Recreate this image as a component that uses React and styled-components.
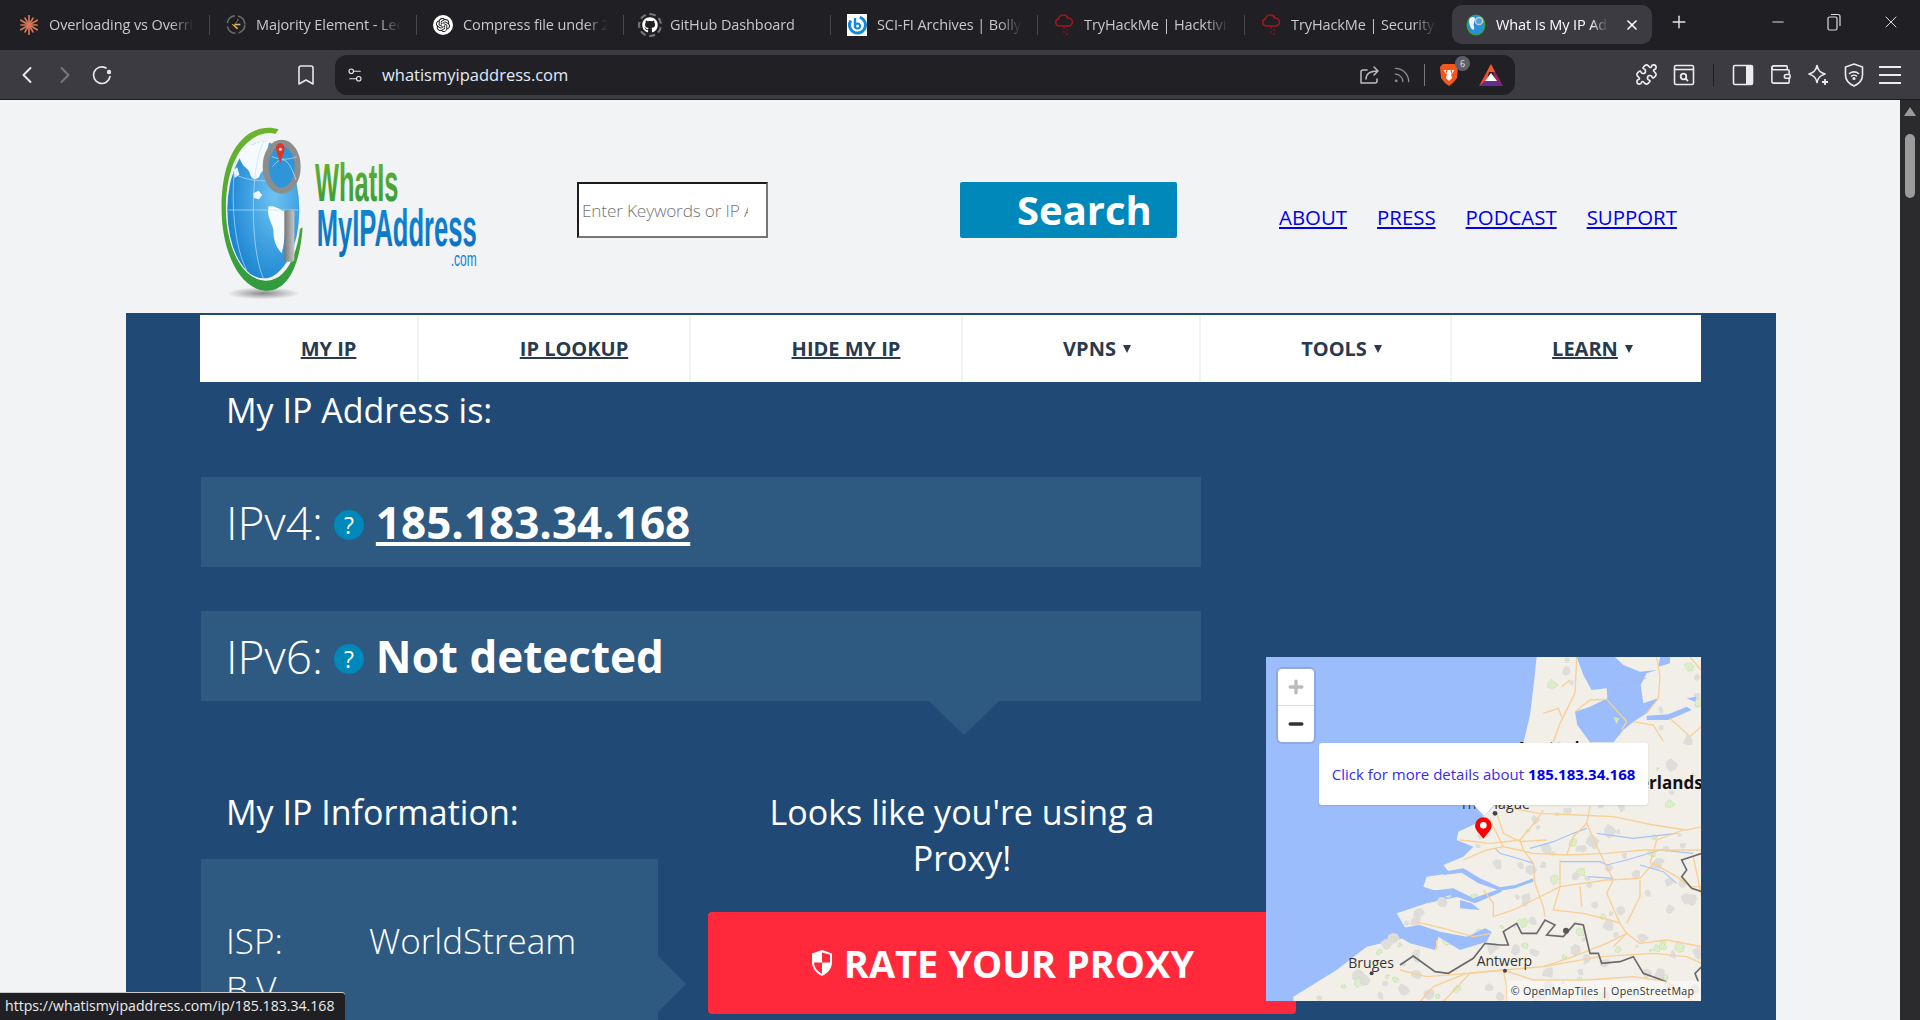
import React from 'react';
import styled, {createGlobalStyle} from 'styled-components';
import {ChevronLeft, ChevronRight, Bookmark, Settings2, Rss, Puzzle, Wallet, Plus, Minus, X} from 'lucide-react';
import {FaGithub} from 'react-icons/fa';
import {SiOpenai} from 'react-icons/si';

const GlobalStyle = createGlobalStyle`
  html, body {
    margin: 0;
    padding: 0;
    height: 1020px;
    overflow: hidden;
    background: #1f1f24;
    font-family: "Open Sans", "Liberation Sans", sans-serif;
  }
  * {
    box-sizing: border-box;
  }
`;

const Shell = styled.div`
  width: 1920px;
  height: 1020px;
  display: flex;
  flex-direction: column;
  overflow: hidden;
  position: relative;
`;

/* browser chrome */
const TabStrip = styled.div`
  height: 50px;
  flex: none;
  background: #1f1f24;
  display: flex;
  align-items: flex-start;
  padding: 5px 0 0 3px;
`;

const Tab = styled.div`
  width: ${(p) => (p.$active ? '200px' : '207px')};
  height: 39px;
  flex: none;
  display: flex;
  align-items: center;
  gap: 10px;
  padding-left: ${(p) => (p.$active ? '14px' : '16px')};
  border-radius: 10px;
  background: ${(p) => (p.$active ? '#3b3b41' : 'transparent')};
  position: relative;
  &::after {
    content: '';
    display: ${(p) => (p.$sep ? 'block' : 'none')};
    position: absolute;
    right: 0;
    top: 10px;
    width: 1px;
    height: 20px;
    background: #47474c;
  }
`;

const TabIcon = styled.span`
  width: 20px;
  height: 20px;
  flex: none;
  display: flex;
  align-items: center;
  justify-content: center;
  position: relative;
`;

const TabTitle = styled.span`
  width: ${(p) => (p.$active ? '112px' : '145px')};
  overflow: hidden;
  white-space: nowrap;
  font-size: 14.5px;
  letter-spacing: -0.1px;
  color: ${(p) => (p.$active ? '#ffffff' : '#c8c8ca')};
  mask-image: linear-gradient(90deg, #000 84%, transparent 100%);
`;

const TabClose = styled.span`
  display: flex;
  margin-left: 6px;
  color: #fff;
`;

const NewTab = styled.span`
  display: flex;
  margin-left: 17px;
  margin-top: 7px;
  color: #e6e6e6;
`;

const WindowButtons = styled.div`
  margin-left: auto;
  display: flex;
  align-items: center;
  gap: 40px;
  padding: 7px 19px 0 0;
  color: #dcdcdc;
`;

const Toolbar = styled.div`
  height: 50px;
  flex: none;
  background: #3b3b41;
  border-bottom: 1px solid #1e1e20;
  display: flex;
  align-items: center;
  padding: 0 0 0 13px;
  color: #e8e8ea;
`;

const NavIcons = styled.div`
  display: flex;
  align-items: center;
  gap: 14px;
  width: 322px;
`;

const ForwardIcon = styled(ChevronRight)`
  margin-left: -4px;
`;

const ReloadSlot = styled.span`
  display: flex;
  margin-left: -3px;
`;

const BookmarkSlot = styled.span`
  display: flex;
  margin-left: auto;
  margin-right: 17px;
`;

const Address = styled.div`
  width: 1180px;
  height: 40px;
  border-radius: 12px;
  background: #202025;
  display: flex;
  align-items: center;
  padding: 0 12px 0 11px;
  flex: none;
`;

const Url = styled.span`
  font-size: 16.5px;
  margin-left: 18px;
  color: #e2ecf8;
`;

const AddressRight = styled.div`
  margin-left: auto;
  display: flex;
  align-items: center;
  color: #bdbdc0;
`;

const FeedIcon = styled(Rss)`
  margin: 0 -2px 0 11px;
  color: #8e8e92;
`;

const VSep = styled.span`
  width: 1px;
  height: 22px;
  background: ${(p) => p.$color || '#77777c'};
  margin: 0 ${(p) => p.$gap || 14}px;
`;

const BadgeWrap = styled.span`
  position: relative;
  display: flex;
  margin-right: 20px;
`;

const Badge = styled.span`
  position: absolute;
  top: -7px;
  right: -11px;
  width: 15px;
  height: 15px;
  border-radius: 50%;
  background: #5d5f6b;
  color: #e4e4e4;
  font-size: 9px;
  line-height: 15px;
  text-align: center;
`;

const RightTools = styled.div`
  flex: 1;
  display: flex;
  align-items: center;
  gap: 15px;
  padding-left: 120px;
  color: #ececee;
`;

/* page */
const Viewport = styled.div`
  flex: 1;
  min-height: 0;
  display: flex;
`;

const Page = styled.main`
  flex: 1;
  min-width: 0;
  background: #f1f3f5;
  overflow: hidden;
  position: relative;
`;

const ScrollTrack = styled.div`
  width: 20px;
  flex: none;
  background: #2b2b2e;
  display: flex;
  flex-direction: column;
  align-items: center;
  padding-top: 7px;
`;

const ScrollArrow = styled.span`
  width: 0;
  height: 0;
  border-left: 6px solid transparent;
  border-right: 6px solid transparent;
  border-bottom: 9px solid #9b9b9b;
`;

const ScrollThumb = styled.span`
  width: 10px;
  height: 64px;
  margin-top: 18px;
  border-radius: 5px;
  background: #9b9b9b;
`;

const Header = styled.header`
  height: 213px;
  display: flex;
  align-items: flex-start;
  padding: 10px 0 0 200px;
`;

const LogoSvg = styled.svg`
  width: 300px;
  height: 200px;
  flex: none;
`;

const SearchInput = styled.input`
  width: 191px;
  height: 56px;
  flex: none;
  margin: 72px 0 0 77px;
  padding: 0 18px 0 3px;
  background: #fff;
  border-style: solid;
  border-width: 2px;
  border-color: #1c1c1c #767676 #767676 #1c1c1c;
  font-family: "Open Sans", sans-serif;
  font-size: 17.3px;
  font-weight: 300;
  letter-spacing: -0.2px;
  &::placeholder {
    color: #757575;
    opacity: 1;
  }
`;

const SearchButton = styled.button`
  width: 217px;
  height: 56px;
  flex: none;
  margin: 72px 0 0 192px;
  padding: 0 0 0 57px;
  border: 0;
  border-radius: 2px;
  background: #0088bb;
  color: #fff;
  font-family: "Open Sans", sans-serif;
  font-size: 40px;
  font-weight: 700;
  line-height: 56px;
  text-align: left;
`;

const TopLinks = styled.nav`
  display: flex;
  gap: 30px;
  margin: 93px 0 0 102px;
`;

const TopLink = styled.a`
  color: #0000ee;
  font-size: 20.4px;
  line-height: 28px;
  text-decoration: underline;
`;

const Panel = styled.section`
  width: 1650px;
  min-height: 800px;
  margin-left: 126px;
  padding: 2px 0 0 74px;
  background: #204a75;
`;

const MainNav = styled.nav`
  display: grid;
  grid-template-columns: 217px 270px 270px 236px 249px 249px;
  gap: 2px;
  width: 1501px;
  height: 67px;
  background: #f1f3f5;
`;

const NavCell = styled.a`
  display: flex;
  align-items: center;
  justify-content: center;
  gap: 7px;
  padding-left: ${(p) => (p.$caret ? '32px' : '40px')};
  background: #fff;
  color: #283a4e;
  font-size: 20px;
  font-weight: 700;
  text-decoration: none;
  & > span {
    text-decoration: ${(p) => (p.$plain ? 'none' : 'underline')};
  }
`;

const Caret = styled.i`
  width: 0;
  height: 0;
  border-left: 4px solid transparent;
  border-right: 4px solid transparent;
  border-top: 8px solid #283a4e;
`;

const Content = styled.div`
  display: grid;
  grid-template-columns: 1000px 435px;
  column-gap: 65px;
  margin-left: 1px;
`;

const Heading = styled.h2`
  margin: ${(p) => (p.$flush ? '0' : '5px 0 0')};
  padding-left: 25px;
  font-size: 34px;
  font-weight: 400;
  line-height: 46px;
  color: #fff;
`;

const IpBox = styled.div`
  height: 90px;
  margin-top: 44px;
  padding-left: 25px;
  background: #2e5a82;
  display: flex;
  align-items: center;
  color: #fff;
  position: relative;
  &::after {
    content: '';
    display: ${(p) => (p.$tail ? 'block' : 'none')};
    position: absolute;
    left: 728px;
    top: 100%;
    border-left: 35px solid transparent;
    border-right: 35px solid transparent;
    border-top: 34px solid #2e5a82;
  }
`;

const IpLabel = styled.span`
  font-size: 46px;
  font-weight: 300;
`;

const Help = styled.span`
  width: 30px;
  height: 30px;
  margin: 6px 12px 0 11px;
  border-radius: 50%;
  background: #0088bb;
  color: #fff;
  font-size: 23px;
  line-height: 30px;
  text-align: center;
`;

const IpValue = styled.a`
  font-size: 44px;
  font-weight: 700;
  color: #fff;
  text-decoration: ${(p) => (p.$link ? 'underline' : 'none')};
`;

const InfoRow = styled.div`
  display: grid;
  grid-template-columns: 457px 508px;
  column-gap: 50px;
  margin-top: 88px;
  width: 1015px;
`;

const InfoBox = styled.div`
  height: 200px;
  margin-top: 24px;
  padding: 58px 25px 0;
  background: #2e5a82;
  color: #fff;
  font-size: 35px;
  font-weight: 300;
  line-height: 48px;
  position: relative;
  &::after {
    content: '';
    position: absolute;
    left: 100%;
    top: 97px;
    border-top: 28px solid transparent;
    border-bottom: 28px solid transparent;
    border-left: 28px solid #2e5a82;
  }
`;

const InfoKey = styled.span`
  display: inline-block;
  width: 143px;
`;

const ProxyCol = styled.div`
  text-align: center;
`;

const ProxyText = styled.p`
  margin: 0;
  padding: 0 60px;
  font-size: 34px;
  line-height: 46px;
  color: #fff;
`;

const RateButton = styled.a`
  width: 588px;
  height: 102px;
  margin-top: 31px;
  border-radius: 4px;
  background: #ff293b;
  color: #fff;
  display: flex;
  align-items: center;
  justify-content: center;
  gap: 10px;
  font-size: 38px;
  font-weight: 700;
  text-decoration: none;
`;

const MapBox = styled.div`
  width: 435px;
  height: 344px;
  margin-top: 275px;
  position: relative;
  z-index: 1;
  overflow: hidden;
  background: #9cbdfb;
`;

const MapSvg = styled.svg`
  display: block;
  width: 435px;
  height: 344px;
`;

const ZoomControl = styled.div`
  position: absolute;
  left: 12px;
  top: 12px;
  width: 36px;
  height: 73px;
  border-radius: 4px;
  background: #fff;
  box-shadow: 0 0 0 2px rgba(0, 0, 0, 0.1);
  display: flex;
  flex-direction: column;
`;

const ZoomButton = styled.span`
  flex: 1;
  display: flex;
  align-items: center;
  justify-content: center;
  color: ${(p) => p.$color};
  & + & {
    border-top: 1px solid #ddd;
  }
`;

const Popup = styled.a`
  position: absolute;
  left: 53px;
  top: 86px;
  width: 329px;
  height: 62px;
  border-radius: 3px;
  background: #fff;
  box-shadow: 0 1px 2px rgba(0, 0, 0, 0.1);
  display: flex;
  align-items: center;
  justify-content: center;
  white-space: nowrap;
  font-size: 15px;
  color: #3a2ce8;
  text-decoration: none;
  &::after {
    content: '';
    position: absolute;
    left: 155px;
    top: 100%;
    border-left: 10px solid transparent;
    border-right: 10px solid transparent;
    border-top: 11px solid #fff;
  }
  & b {
    margin-left: 4px;
    color: #0000ee;
  }
`;

const StatusBar = styled.div`
  position: absolute;
  left: 0;
  bottom: 0;
  width: 345px;
  height: 27px;
  border-top-right-radius: 3px;
  background: #202024;
  box-shadow: 0 -1px 0 #c9c9c9;
  color: #ececec;
  font-size: 14.1px;
  line-height: 26px;
  padding-left: 5px;
  z-index: 2;
`;

/* favicons */
const ClaudeIcon = () => (
  <svg width="20" height="20" viewBox="0 0 20 20" stroke="#d97757" strokeWidth="1.7" strokeLinecap="round">
    {[0, 30, 60, 90, 120, 150, 180, 210, 240, 270, 300, 330].map((a) => (
      <line key={a} x1="10" y1="10" x2="10" y2={a % 60 === 0 ? 0.5 : 2} transform={`rotate(${a} 10 10)`} />
    ))}
  </svg>
);

const LeetIcon = () => (
  <svg width="25" height="25" viewBox="0 0 25 25" fill="none">
    <circle cx="12.5" cy="12.5" r="11" stroke="#6a6a6c" strokeWidth="2" strokeDasharray="14 4" />
    <path d="M15 6L9 12.5l5.5 5.5" stroke="#f0a21c" strokeWidth="2.2" />
    <path d="M11 12.5h7" stroke="#b9b9b9" strokeWidth="2" />
    <path d="M14 6L8.5 12" stroke="#111" strokeWidth="2.4" />
  </svg>
);

const RingIcon = styled.span`
  width: 24px;
  height: 24px;
  flex: none;
  border-radius: 50%;
  border: 2px dashed #747476;
  display: flex;
  align-items: center;
  justify-content: center;
  color: #fff;
`;

const WhiteDisc = styled.span`
  width: 20px;
  height: 20px;
  border-radius: 50%;
  background: #fff;
  color: #111;
  display: flex;
  align-items: center;
  justify-content: center;
`;

const BingIcon = () => (
  <svg width="20" height="22" viewBox="0 0 20 22">
    <rect width="20" height="22" fill="#fff" />
    <circle cx="10.5" cy="11" r="8" fill="none" stroke="#1388d8" strokeWidth="3" strokeDasharray="38 10" transform="rotate(-60 10.5 11)" />
    <path d="M8 4v10" stroke="#1388d8" strokeWidth="2.4" />
    <circle cx="10.5" cy="12" r="2.6" fill="none" stroke="#1388d8" strokeWidth="2" />
  </svg>
);

const ThmIcon = () => (
  <svg width="20" height="24" viewBox="0 0 20 24" fill="none">
    <path d="M5 13a3.5 3.5 0 0 1-.6-6.9A5 5 0 0 1 14 5.2a3.6 3.6 0 0 1 1 7.8H5z" stroke="#a3171d" strokeWidth="1.5" />
    <path d="M9 15h2M12 17h2M9 19h2M12 21h2" stroke="#7c1419" strokeWidth="1.6" />
  </svg>
);

const GlobeFav = () => (
  <svg width="20" height="22" viewBox="0 0 20 22">
    <ellipse cx="10" cy="11" rx="9.5" ry="10.5" fill="#3b9f3a" />
    <ellipse cx="10" cy="11" rx="8" ry="9.5" fill="#2a8fd8" />
    <path d="M4 4c3-2 5-1 5 1S7 9 8 13s-2 3-3 1-3-7-1-10z" fill="#e9f5fd" />
    <circle cx="13" cy="7" r="3.6" fill="#4aa3df" stroke="#c9c9c9" strokeWidth="1.5" />
  </svg>
);

const TABS = [
  {title: 'Overloading vs Overriding', icon: <ClaudeIcon />, sep: true},
  {title: 'Majority Element - LeetCode', icon: <LeetIcon />, sep: true},
  {title: 'Compress file under 2 MB', icon: <WhiteDisc><SiOpenai size={14} /></WhiteDisc>, sep: true},
  {title: 'GitHub Dashboard', icon: <RingIcon><FaGithub size={16} /></RingIcon>, sep: true},
  {title: 'SCI-FI Archives | Bollyflix', icon: <BingIcon />, sep: true},
  {title: 'TryHackMe | Hacktivities', icon: <ThmIcon />, sep: true},
  {title: 'TryHackMe | Security Training', icon: <ThmIcon />, sep: false},
];

const ReloadIcon = () => (
  <svg width="24" height="24" viewBox="0 0 24 24" fill="none" stroke="currentColor" strokeWidth="1.7">
    <path d="M20 13.5A8.3 8.3 0 1 1 16 5" strokeLinecap="round" />
    <circle cx="19" cy="9" r="2.2" fill="currentColor" stroke="none" />
  </svg>
);

const ShareIcon = () => (
  <svg width="22" height="22" viewBox="0 0 22 22" fill="none" stroke="currentColor" strokeWidth="1.5" strokeLinecap="round" strokeLinejoin="round">
    <path d="M8 6H4a2 2 0 0 0-2 2v11h14a2 2 0 0 0 2-2v-2" />
    <path d="M7 15c0-5 4-8 12-8M15 3l4 4-4 4" />
  </svg>
);

const BraveIcon = () => (
  <svg width="20" height="24" viewBox="0 0 20 24">
    <path d="M4 1h12l3 3-1 11-4 5-4 3-4-3-4-5L1 4z" fill="#f1561f" />
    <path d="M5 7h10l-1 3-2 1 1 4-3 3-3-3 1-4-2-1z" fill="#fff" />
    <path d="M8 7l-1 3M12 7l1 3" stroke="#f1561f" strokeWidth="1.2" />
  </svg>
);

const BatIcon = () => (
  <svg width="24" height="22" viewBox="0 0 24 22">
    <polygon points="12,0 24,22 16,16" fill="#9e1f63" />
    <polygon points="12,0 0,22 8,16" fill="#ef4b2c" />
    <polygon points="0,22 24,22 18,17 6,17" fill="#662d91" />
    <polygon points="12,9 6,17 18,17" fill="#fff" />
    <polygon points="12,0 8,8 16,8" fill="#f05a24" />
  </svg>
);

const ReaderIcon = () => (
  <svg width="22" height="22" viewBox="0 0 22 22" fill="none" stroke="currentColor" strokeWidth="1.6">
    <rect x="1.5" y="1.5" width="19" height="19" rx="1.5" />
    <path d="M1.5 5.5h19" />
    <circle cx="10.5" cy="12.5" r="2.8" strokeWidth="1.8" />
    <path d="M12.5 14.5l2.5 2.5" strokeWidth="1.8" />
  </svg>
);

const SidebarIcon = () => (
  <svg width="22" height="22" viewBox="0 0 22 22">
    <rect x="1.5" y="1.5" width="19" height="19" rx="1.5" fill="none" stroke="currentColor" strokeWidth="1.6" />
    <rect x="14" y="1.5" width="6.5" height="19" fill="currentColor" />
  </svg>
);

const SparkIcon = () => (
  <svg width="22" height="22" viewBox="0 0 22 22" fill="none" stroke="currentColor" strokeWidth="1.6" strokeLinejoin="round">
    <path d="M10 1.5c1 5 3 7 8 8.500-5 1.500-7 3.500-8 8.500-1-5-3-7-8-8.500 5-1.500 7-3.500 8-8.500z" />
    <path d="M18 15v6M15 18h6" strokeWidth="1.8" />
  </svg>
);

const VpnIcon = () => (
  <svg width="20" height="24" viewBox="0 0 20 24" fill="none" stroke="currentColor" strokeWidth="1.6" strokeLinecap="round">
    <path d="M10 1l8.500 3v8c0 5-4 9-8.500 11C5.500 21 1.500 17 1.500 12V4z" />
    <path d="M5.500 10.500c2.500-2.200 6.500-2.200 9 0M7.500 13c1.300-1.100 3.700-1.100 5 0" />
    <circle cx="10" cy="15.500" r="0.8" fill="currentColor" />
  </svg>
);

const MenuIcon = () => (
  <svg width="22" height="20" viewBox="0 0 22 20" stroke="currentColor" strokeWidth="2">
    <path d="M0 2h22M0 10h22M0 18h22" />
  </svg>
);

const RestoreIcon = () => (
  <svg width="14" height="18" viewBox="0 0 14 18" fill="none" stroke="currentColor" strokeWidth="1.2">
    <rect x="1" y="4" width="9" height="13" rx="1.5" />
    <path d="M4 1.500h7a2 2 0 0 1 2 2V13" />
  </svg>
);

const ShieldMark = () => (
  <svg width="24" height="28" viewBox="0 0 24 28">
    <path d="M12 1l10 3.500V13c0 6.500-4 11-10 14C6 24 2 19.500 2 13V4.500z" fill="#fff" />
    <path d="M12 3.500v10h8V5.800zM12 13.500H4c.3 5 3.200 8.700 8 11.200z" fill="#ff293b" />
  </svg>
);

const Logo = () => (
  <LogoSvg viewBox="0 0 900 600">
    <defs>
      <linearGradient id="lgGreen" x1="0" y1="0" x2="0" y2="1">
        <stop offset="0" stopColor="#6cb52d" />
        <stop offset="1" stopColor="#2f9a3e" />
      </linearGradient>
      <linearGradient id="lgBlue" x1="0" y1="0" x2="0" y2="1">
        <stop offset="0" stopColor="#0f8ad8" />
        <stop offset="1" stopColor="#0b6fc0" />
      </linearGradient>
      <radialGradient id="lgGlobe" cx="0.65" cy="0.4" r="0.8">
        <stop offset="0" stopColor="#6dc3f2" />
        <stop offset="1" stopColor="#0a78cc" />
      </radialGradient>
      <linearGradient id="lgHandle" x1="0" y1="0" x2="1" y2="0">
        <stop offset="0" stopColor="#777" />
        <stop offset="1" stopColor="#c8c8c8" />
      </linearGradient>
      <radialGradient id="lgShade">
        <stop offset="0" stopColor="#8a8a8a" />
        <stop offset="1" stopColor="#f1f3f5" />
      </radialGradient>
    </defs>
    <ellipse cx="190" cy="550" rx="110" ry="18" fill="url(#lgShade)" />
    <ellipse cx="190" cy="300" rx="108" ry="205" fill="url(#lgGlobe)" />
    <path d="M118 130c25-25 60-38 90-35-8 25-8 50 0 85-15-5-25 5-30 20-15 15-25 5-30-15-10-15-30-20-30-55z" fill="#fff" opacity="0.95" />
    <path d="M205 290c15-5 30 5 50 15 3 40 0 90-10 125-18-20-25-40-25-70-5-25-20-40-15-70z" fill="#fff" opacity="0.95" />
    <path d="M160 250l15-8 12 12-10 14-15-4zM100 180l12-8 6 22-14 10z" fill="#fff" opacity="0.9" />
    <path d="M120 110c-30 60-30 280 20 370M190 95c-40 80-40 320 0 410M85 300h210M100 190c50 30 130 30 185 0" fill="none" stroke="#bfe2f7" strokeWidth="2" />
    <path d="M236 58C210 50 165 48 125 90 80 135 62 220 65 310c3 110 50 225 130 232 70 5 105-80 113-190l-8 5c-12 95-50 158-105 155-75-5-115-110-117-205-2-85 18-165 60-205 30-30 65-38 88-30z" fill="url(#lgGreen)" />
    <ellipse cx="245" cy="170" rx="48" ry="72" fill="#2e95da" stroke="#8d8d8d" strokeWidth="18" />
    <path d="M218 170c30-40 50-20 70 40M215 140c30 10 50 10 75 0" fill="none" stroke="#cbe7f8" strokeWidth="2" />
    <path d="M241 100c-12 0-15 14-12 24 3 10 8 24 12 36 4-12 9-26 12-36 3-10 0-24-12-24z" fill="#d8392b" />
    <circle cx="241" cy="118" r="4.500" fill="#f6d9d6" />
    <rect x="253" y="300" width="30" height="155" rx="8" fill="url(#lgHandle)" />
    <text x="345" y="272" fontFamily="Liberation Sans" fontWeight="700" fontSize="162" textLength="250" lengthAdjust="spacingAndGlyphs" fill="url(#lgGreen)">WhatIs</text>
    <text x="350" y="408" fontFamily="Liberation Sans" fontWeight="700" fontSize="158" textLength="480" lengthAdjust="spacingAndGlyphs" fill="url(#lgBlue)">MyIPAddress</text>
    <text x="752" y="468" fontFamily="Liberation Sans" fontSize="58" textLength="78" lengthAdjust="spacingAndGlyphs" fill="#0f7fd0">.com</text>
  </LogoSvg>
);

const pts = (list) => list.map((p) => p.join(',')).join(' ');

/* map artwork: top part in viewBox units, lower part in the local units of the group below */
const ROADS = [
  [[180, 120], [270, 130], [360, 120], [370, 150], [400, 190], [405, 250], [430, 320], [435, 350]],
  [[290, 40], [310, 100], [360, 125], [440, 120]],
  [[430, 30], [410, 60], [360, 120]],
  [[270, 60], [310, 140], [400, 160], [500, 165], [620, 160], [730, 150], [905, 150]],
  [[500, 165], [520, 110], [560, 70], [570, 20]],
  [[560, 70], [600, 160], [640, 240], [620, 280], [660, 370], [680, 400]],
  [[280, 15], [420, 40], [530, 45], [640, 50], [760, 75], [860, 90], [905, 80]],
  [[190, 180], [260, 150], [310, 140]],
  [[250, 270], [280, 310], [280, 350], [340, 330], [400, 300], [480, 260], [620, 240], [720, 235], [760, 190], [830, 230], [870, 260], [905, 260]],
  [[480, 180], [480, 260], [460, 330], [550, 340], [630, 360], [660, 370]],
  [[540, 260], [545, 320]],
  [[720, 240], [720, 290], [680, 370]],
  [[640, 440], [680, 400], [720, 430], [800, 420], [905, 440]],
  [[750, 190], [770, 120], [850, 90]],
  [[45, 365], [130, 385], [220, 410], [275, 400]],
  [[110, 420], [110, 450]],
  [[0, 510], [80, 530], [200, 520], [310, 510], [430, 500], [520, 470], [620, 430], [680, 400]],
  [[310, 510], [320, 560], [320, 605]],
  [[310, 510], [400, 540], [560, 540], [700, 530], [800, 545], [880, 605]],
  [[430, 500], [600, 470], [760, 460], [860, 470], [905, 490]],
  [[310, 510], [210, 520], [130, 605]],
  [[200, 520], [100, 560], [60, 605]],
  [[880, 170], [905, 290]],
];

const TOP_ROADS = [
  [[950, 21], [945, 130], [900, 220], [880, 275]],
  [[905, 110], [930, 90]],
  [[1040, 148], [1100, 215], [1085, 240]],
  [[945, 185], [990, 150], [1040, 148]],
  [[850, 190], [895, 175], [905, 200]],
  [[1120, 215], [1180, 225], [1210, 275]],
  [[1195, 145], [1200, 80], [1190, 21]],
  [[1160, 190], [1195, 145]],
  [[1230, 205], [1290, 260], [1323, 230]],
  [[1323, 60], [1290, 21]],
];

const RIVERS = [
  [[285, 145], [300, 160], [370, 180], [400, 190]],
  [[390, 145], [460, 125], [520, 100], [560, 85]],
  [[590, 100], [700, 115], [830, 100]],
  [[480, 185], [600, 185], [620, 195], [680, 180], [780, 150], [880, 160]],
  [[565, 230], [640, 235]],
  [[720, 195], [790, 215], [830, 250]],
];

const ESTUARIES = [
  [[130, 215], [190, 205], [240, 235], [300, 262], [345, 255], [400, 235], [400, 245], [345, 265], [300, 272], [235, 250], [185, 218], [130, 225]],
  [[70, 275], [160, 265], [220, 295], [305, 265], [305, 275], [225, 310], [155, 285], [70, 300]],
  [[180, 300], [215, 310], [240, 330], [180, 325]],
  [[60, 375], [120, 395], [200, 410], [255, 385], [275, 395], [260, 425], [180, 450], [115, 410], [105, 450], [30, 430], [0, 412], [0, 385]],
];

const BORDERS = [
  [[0, 495], [40, 468], [105, 515], [145, 520], [220, 475], [255, 430], [300, 435], [325, 435], [310, 395], [350, 370], [365, 400], [410, 400], [435, 360], [465, 375], [440, 405], [490, 410], [525, 370], [550, 375], [570, 460], [595, 460], [605, 490], [660, 485], [700, 470], [730, 520], [800, 545]],
  [[905, 160], [845, 180], [860, 210], [845, 230], [875, 265], [905, 275]],
  [[905, 500], [885, 520], [895, 545]],
];

const coastAt = (y) => {
  if (y < 280) return 850;
  if (y < 600) return 790 - (y - 280) * 0.63;
  if (y < 890) return 590 - (y - 600) * 0.9;
  return 330 - (y - 890) * 1.35;
};

/* fixed seed, so the speckle of towns and woods is the same on every load */
const scatter = (seed, count, maxSize) => {
  let s = seed;
  const rnd = () => {
    s = (s * 1103515245 + 12345) % 2147483648;
    return s / 2147483648;
  };
  const out = [];
  while (out.length < count) {
    const x = 40 + rnd() * 1283;
    const y = 21 + rnd() * 1032;
    const inNorthWater = y < 280 && x > 950 && x < 1190;
    if (x > coastAt(y) + 25 && !inNorthWater) {
      const size = 5 + rnd() * maxSize;
      const corners = [0, 1, 2, 3, 4, 5, 6].map((i) => {
        const a = (i / 7) * Math.PI * 2;
        const r = size * (0.6 + rnd() * 0.6);
        return [Math.round(x + Math.cos(a) * r), Math.round(y + Math.sin(a) * r)];
      });
      out.push(pts(corners));
    }
  }
  return out;
};

const TOWNS = scatter(7, 120, 16);
const WOODS = scatter(91, 45, 12);

const MapArt = () => (
  <MapSvg viewBox="18 21 1305 1032" preserveAspectRatio="none">
    <rect x="18" y="21" width="1305" height="1032" fill="#9cbdfb" />
    <path d="M830 21L820 115 810 195 790 280 740 350 700 470 650 520 595 545 590 570 640 590 610 620 550 645 570 670 500 680 490 710 520 720 620 735 500 760 410 790 440 840 510 860 430 865 320 890 230 960 100 1040 100 1053 1323 1053 1323 21Z" fill="#f2efe9" />
    {TOWNS.map((t) => (
      <polygon key={t} points={t} fill="#dfddd9" />
    ))}
    {WOODS.map((t) => (
      <polygon key={t} points={t} fill="#dcedc8" stroke="#9bdc86" strokeWidth="2" strokeDasharray="3 4" />
    ))}
    <polygon points="950,21 970,75 995,120 1040,115 1042,145 990,170 945,185 952,225 990,277 1060,277 1090,240 1120,215 1160,190 1195,145 1150,160 1142,105 1160,70 1190,60 1140,65 1090,45 1065,21" fill="#9cbdfb" />
    <polygon points="1160,197 1225,193 1280,170 1295,180 1225,210 1160,210" fill="#9cbdfb" />
    <polygon points="1200,21 1230,21 1230,40 1195,50" fill="#9cbdfb" />
    <polygon points="1280,145 1310,140 1305,155" fill="#9cbdfb" />
    <polygon points="1060,200 1078,205 1070,222" fill="#cfe6b8" />
    <path d="M1070 105L1160 85M1065 105L1060 140M1040 150L960 200" fill="none" stroke="#a9b6d2" strokeWidth="2" />
    {TOP_ROADS.map((r) => (
      <polyline key={pts(r)} points={pts(r)} fill="none" stroke="#f8cf95" strokeWidth="4" />
    ))}
    <g transform="translate(420 450)">
      {ESTUARIES.map((e) => (
        <polygon key={pts(e)} points={pts(e)} fill="#9cbdfb" />
      ))}
      {RIVERS.map((r) => (
        <polyline key={pts(r)} points={pts(r)} fill="none" stroke="#a5c3fa" strokeWidth="3.500" />
      ))}
      {ROADS.map((r) => (
        <polyline key={pts(r)} points={pts(r)} fill="none" stroke="#f8cf95" strokeWidth="4" />
      ))}
      {BORDERS.map((b) => (
        <polyline key={pts(b)} points={pts(b)} fill="none" stroke="#6a6a6a" strokeWidth="5" />
      ))}
    </g>
    <circle cx="705" cy="490" r="7" fill="#444" />
    <circle cx="335" cy="970" r="6" fill="#444" />
    <circle cx="735" cy="962" r="6" fill="#444" />
    <circle cx="918" cy="842" r="9" fill="#555" />
    <g fontFamily="Open Sans" fill="#333">
      <text x="600" y="478" fontSize="42">The Hague</text>
      <text x="265" y="955" fontSize="42">Bruges</text>
      <text x="650" y="948" fontSize="42">Antwerp</text>
      <text x="770" y="306" fontSize="44" fontWeight="700" fill="#111">Amsterdam</text>
      <text x="1328" y="418" fontSize="51" fontWeight="700" fill="#111" textAnchor="end">Netherlands</text>
    </g>
    <path d="M670 566c-8-12-25-25-25-39a25 25 0 0 1 50 0c0 14-17 27-25 39z" fill="#f00" />
    <circle cx="670" cy="526" r="10" fill="#fff" />
    <rect x="740" y="992" width="583" height="61" fill="#fff" opacity="0.45" />
    <text x="752" y="1034" fontFamily="Open Sans" fontSize="32" fill="#333" letterSpacing="1">© OpenMapTiles | OpenStreetMap</text>
  </MapSvg>
);

const App = () => {
  return (
    <Shell>
      <GlobalStyle />
      <TabStrip>
        {TABS.map((tab) => (
          <Tab key={tab.title} $sep={tab.sep}>
            <TabIcon>{tab.icon}</TabIcon>
            <TabTitle>{tab.title}</TabTitle>
          </Tab>
        ))}
        <Tab $active>
          <TabIcon><GlobeFav /></TabIcon>
          <TabTitle $active>What Is My IP Address</TabTitle>
          <TabClose><X size={16} strokeWidth={2.4} /></TabClose>
        </Tab>
        <NewTab><Plus size={20} strokeWidth={1.7} /></NewTab>
        <WindowButtons>
          <Minus size={18} strokeWidth={1.4} />
          <RestoreIcon />
          <X size={20} strokeWidth={1.2} />
        </WindowButtons>
      </TabStrip>
      <Toolbar>
        <NavIcons>
          <ChevronLeft size={28} strokeWidth={1.7} />
          <ForwardIcon size={28} strokeWidth={1.7} color="#77777b" />
          <ReloadSlot><ReloadIcon /></ReloadSlot>
          <BookmarkSlot><Bookmark size={24} strokeWidth={1.6} /></BookmarkSlot>
        </NavIcons>
        <Address>
          <Settings2 size={18} strokeWidth={1.5} />
          <Url>whatismyipaddress.com</Url>
          <AddressRight>
            <ShareIcon />
            <FeedIcon size={20} strokeWidth={1.5} />
            <VSep />
            <BadgeWrap>
              <BraveIcon />
              <Badge>6</Badge>
            </BadgeWrap>
            <BatIcon />
          </AddressRight>
        </Address>
        <RightTools>
          <Puzzle size={23} strokeWidth={1.7} />
          <ReaderIcon />
          <VSep $gap={3} $color="#1f1f22" />
          <SidebarIcon />
          <Wallet size={23} strokeWidth={1.6} />
          <SparkIcon />
          <VpnIcon />
          <MenuIcon />
        </RightTools>
      </Toolbar>
      <Viewport>
        <Page>
          <Header>
            <Logo />
            <SearchInput placeholder="Enter Keywords or IP Address" />
            <SearchButton>Search</SearchButton>
            <TopLinks>
              <TopLink href="#">ABOUT</TopLink>
              <TopLink href="#">PRESS</TopLink>
              <TopLink href="#">PODCAST</TopLink>
              <TopLink href="#">SUPPORT</TopLink>
            </TopLinks>
          </Header>
          <Panel>
            <MainNav>
              <NavCell href="#"><span>MY IP</span></NavCell>
              <NavCell href="#"><span>IP LOOKUP</span></NavCell>
              <NavCell href="#"><span>HIDE MY IP</span></NavCell>
              <NavCell href="#" $plain $caret><span>VPNS</span><Caret /></NavCell>
              <NavCell href="#" $plain $caret><span>TOOLS</span><Caret /></NavCell>
              <NavCell href="#" $caret><span>LEARN</span><Caret /></NavCell>
            </MainNav>
            <Content>
              <div>
                <Heading>My IP Address is:</Heading>
                <IpBox>
                  <IpLabel>IPv4:</IpLabel>
                  <Help>?</Help>
                  <IpValue href="#" $link>185.183.34.168</IpValue>
                </IpBox>
                <IpBox $tail>
                  <IpLabel>IPv6:</IpLabel>
                  <Help>?</Help>
                  <IpValue>Not detected</IpValue>
                </IpBox>
                <InfoRow>
                  <div>
                    <Heading as="h3" $flush>My IP Information:</Heading>
                    <InfoBox><InfoKey>ISP:</InfoKey>WorldStream B.V.</InfoBox>
                  </div>
                  <ProxyCol>
                    <ProxyText>Looks like you're using a Proxy!</ProxyText>
                    <RateButton href="#"><ShieldMark />RATE YOUR PROXY</RateButton>
                  </ProxyCol>
                </InfoRow>
              </div>
              <MapBox>
                <MapArt />
                <ZoomControl>
                  <ZoomButton $color="#bbbbbb"><Plus size={20} strokeWidth={4} /></ZoomButton>
                  <ZoomButton $color="#333333"><Minus size={20} strokeWidth={4} /></ZoomButton>
                </ZoomControl>
                <Popup href="#">Click for more details about<b>185.183.34.168</b></Popup>
              </MapBox>
            </Content>
          </Panel>
          <StatusBar>https://whatismyipaddress.com/ip/185.183.34.168</StatusBar>
        </Page>
        <ScrollTrack>
          <ScrollArrow />
          <ScrollThumb />
        </ScrollTrack>
      </Viewport>
    </Shell>
  );
};

export default App;
